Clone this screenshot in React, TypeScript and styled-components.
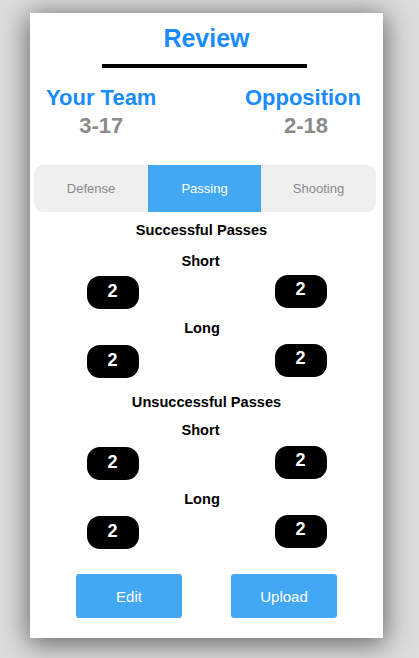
import React, { useState } from "react";
import styled, { createGlobalStyle } from "styled-components";

const GlobalStyle = createGlobalStyle`
  body {
    margin: 0;
    background: #dddddd;
    font-family: "Liberation Sans", Arial, sans-serif;
  }
`;

const Page = styled.div`
  padding: 13px 0 20px 30px;
`;

const Card = styled.main`
  width: 353px;
  background: #ffffff;
  box-shadow: 0 4px 26px 2px rgba(0, 0, 0, 0.55);
  padding: 11px 0 20px;
  box-sizing: border-box;
  display: flex;
  flex-direction: column;
  align-items: center;
`;

const Title = styled.h1`
  margin: 0;
  font-size: 25px;
  line-height: 29px;
  font-weight: bold;
  color: #1a8cff;
`;

const Rule = styled.div`
  width: 205px;
  height: 4px;
  background: #000;
  margin: 11px 4px 0 0;
`;

const Teams = styled.div`
  align-self: stretch;
  display: flex;
  justify-content: space-between;
  padding: 0 22px 0 16px;
  margin-top: 17px;
`;

const Team = styled.div<{ $shift?: number }>`
  display: flex;
  flex-direction: column;
  align-items: center;
  gap: 3px;
  & > span:last-child {
    margin-left: ${(p) => p.$shift ?? 0}px;
  }
`;

const TeamName = styled.span`
  font-size: 22px;
  line-height: 25px;
  font-weight: bold;
  color: #1a8cff;
`;

const Score = styled.span`
  font-size: 22px;
  line-height: 25px;
  font-weight: bold;
  color: #8a8a8a;
`;

const Tabs = styled.div`
  align-self: stretch;
  margin: 27px 7px 0 4px;
  height: 47px;
  display: grid;
  grid-template-columns: 114px 113px 1fr;
  background: #efefef;
  border-radius: 9px;
  overflow: hidden;
`;

const Tab = styled.button<{ $active?: boolean }>`
  border: none;
  margin: 0;
  padding: 0;
  font-family: inherit;
  font-size: 13px;
  cursor: pointer;
  background: ${(p) => (p.$active ? "#42a8f4" : "transparent")};
  color: ${(p) => (p.$active ? "#ffffff" : "#8a8a8a")};
`;

const Heading = styled.div<{ $top: number; $left?: number }>`
  font-size: 14.6px;
  line-height: 17px;
  font-weight: bold;
  color: #000;
  margin-top: ${(p) => p.$top}px;
  margin-right: ${(p) => (p.$left ?? 0) * 2}px;
`;

const PillRow = styled.div<{ $top: number }>`
  display: flex;
  gap: 136px;
  margin-top: ${(p) => p.$top}px;
`;

const Pill = styled.div<{ $lift?: boolean }>`
  width: 52px;
  height: 33px;
  box-sizing: border-box;
  padding-bottom: ${(p) => (p.$lift ? 4 : 3)}px;
  border-radius: 13px;
  background: #000;
  color: #fff;
  font-size: 18px;
  font-weight: bold;
  display: flex;
  align-items: center;
  justify-content: center;
  transform: translateY(${(p) => (p.$lift ? -1 : 0)}px);
`;

const Actions = styled.div`
  display: flex;
  gap: 49px;
  margin-top: 25px;
`;

const ActionButton = styled.button`
  width: 106px;
  height: 44px;
  border: none;
  border-radius: 3px;
  background: #42a8f4;
  color: #fff;
  font-family: inherit;
  font-size: 15px;
  cursor: pointer;
`;

type Block = {
  label: string;
  top: number;
  labelLeft: number;
  shortTop: number;
  pillTop: number;
  short: [number, number];
  long: [number, number];
};

const passing: Block[] = [
  { label: "Successful Passes", top: 10, labelLeft: 5, shortTop: 14, pillTop: 6, short: [2, 2], long: [2, 2] },
  { label: "Unsuccessful Passes", top: 16, labelLeft: 0, shortTop: 11, pillTop: 8, short: [2, 2], long: [2, 2] },
];

export default function App() {
  const [tab, setTab] = useState("Passing");

  return (
    <Page>
      <GlobalStyle />
      <Card>
        <Title>Review</Title>
        <Rule />
        <Teams>
          <Team>
            <TeamName>Your Team</TeamName>
            <Score>3-17</Score>
          </Team>
          <Team $shift={6}>
            <TeamName>Opposition</TeamName>
            <Score>2-18</Score>
          </Team>
        </Teams>

        <Tabs>
          {["Defense", "Passing", "Shooting"].map((t) => (
            <Tab key={t} $active={tab === t} onClick={() => setTab(t)}>
              {t}
            </Tab>
          ))}
        </Tabs>

        {passing.map((b) => (
          <React.Fragment key={b.label}>
            <Heading $top={b.top} $left={b.labelLeft}>{b.label}</Heading>
            <Heading $top={b.shortTop} $left={6}>Short</Heading>
            <PillRow $top={b.pillTop}>
              <Pill>{b.short[0]}</Pill>
              <Pill $lift>{b.short[1]}</Pill>
            </PillRow>
            <Heading $top={11} $left={4.5}>Long</Heading>
            <PillRow $top={8}>
              <Pill>{b.long[0]}</Pill>
              <Pill $lift>{b.long[1]}</Pill>
            </PillRow>
          </React.Fragment>
        ))}

        <Actions>
          <ActionButton>Edit</ActionButton>
          <ActionButton>Upload</ActionButton>
        </Actions>
      </Card>
    </Page>
  );
}
